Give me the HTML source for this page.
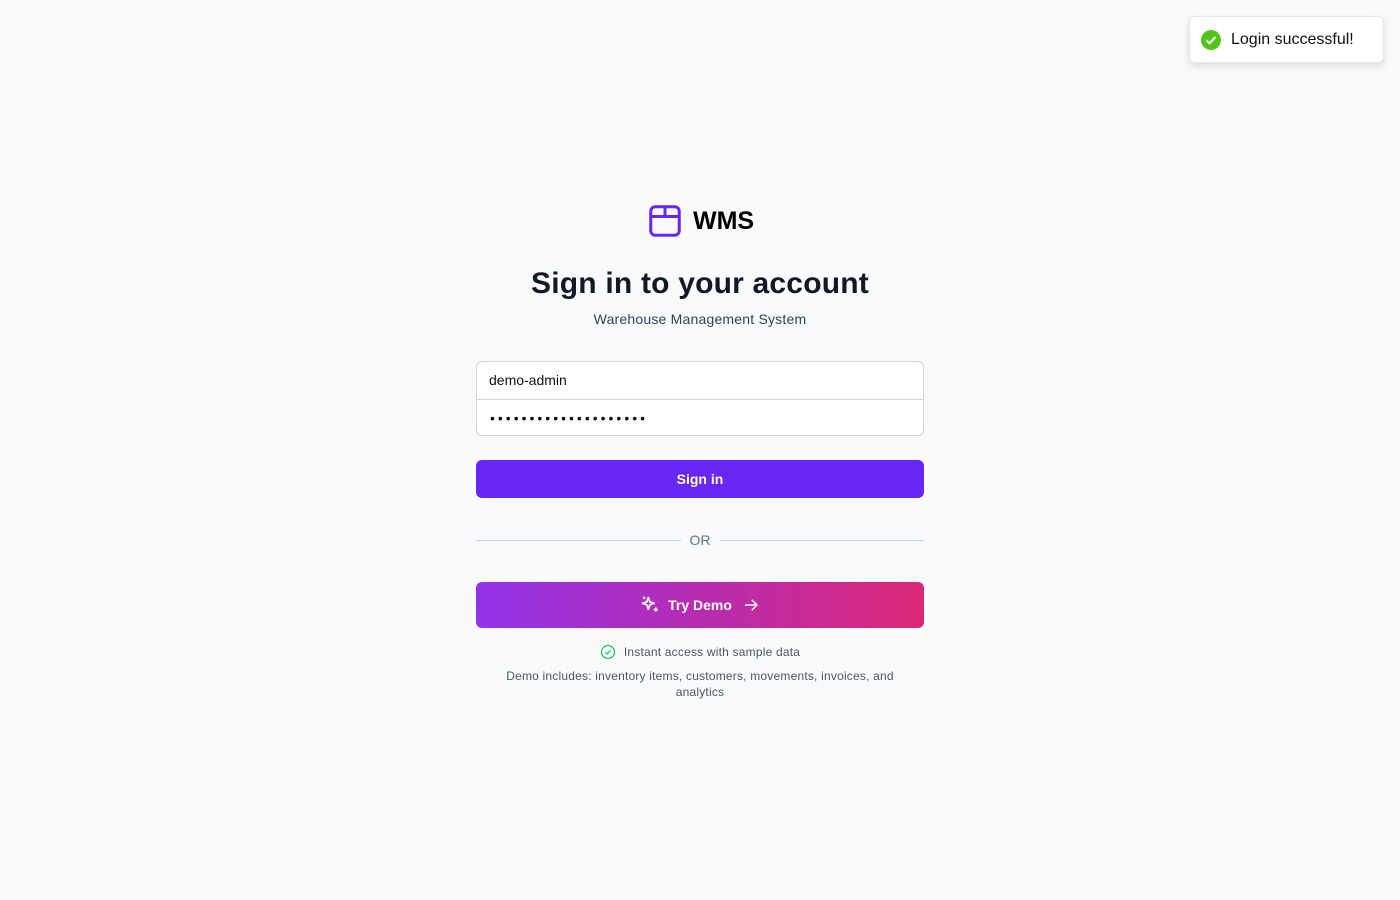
<!DOCTYPE html>
<html><head><style>
*{box-sizing:border-box;margin:0;padding:0}
body{width:1400px;height:900px;background:#f9fafb;font-family:"Liberation Sans",sans-serif;position:relative;overflow:hidden}
.toast{position:absolute;left:1189px;top:16px;width:195px;height:47px;background:#fff;border:1px solid #e5e7eb;border-radius:6px;box-shadow:0 3px 8px rgba(0,0,0,.12);display:flex;align-items:center;padding-left:11px;font-size:16px;color:#111}
.toast svg{margin-right:10px}
.logo{position:absolute;left:647px;top:203px;display:flex;align-items:center}
.logo span{font-size:25px;font-weight:bold;color:#000;margin-left:10px}
h1{position:absolute;top:267px;width:100%;text-align:center;font-size:30px;font-weight:bold;color:#111827;letter-spacing:0.2px}
.sub{position:absolute;top:311px;width:100%;text-align:center;font-size:14px;color:#374151;letter-spacing:0.2px}
.inputs{position:absolute;left:476px;top:361px;width:448px;height:75px;border:1px solid #d1d5db;border-radius:6px;background:#fff}
.inputs div{height:37px;padding-left:12px;line-height:37px;font-size:14px;color:#111}
.inputs div+div{border-top:1px solid #d1d5db;letter-spacing:3px;padding-left:13px}
.btn{position:absolute;left:476px;top:460px;width:448px;height:38px;background:#6526f6;border-radius:6px;color:#fff;font-weight:bold;font-size:14px;text-align:center;line-height:38px}
.or{position:absolute;left:476px;top:532px;width:448px;display:flex;align-items:center;font-size:14px;color:#6b7280}
.or i{flex:1;height:1px;background:#d1d5db}.or b{font-weight:normal;padding:0 9px}
.demo{position:absolute;left:476px;top:582px;width:448px;height:46px;border-radius:6px;background:linear-gradient(90deg,#9333ea,#db2777);color:#fff;font-weight:bold;font-size:14px;display:flex;align-items:center;justify-content:center}
.note{position:absolute;top:644px;width:100%;text-align:center;font-size:12px;color:#4b5563;display:flex;justify-content:center;align-items:center;letter-spacing:0.2px}
.inc{position:absolute;left:490px;top:668px;width:420px;text-align:center;font-size:12px;color:#4b5563;line-height:16px;letter-spacing:0.2px}
</style></head><body>
<div class="toast"><svg width="20" height="20" viewBox="0 0 20 20"><circle cx="10" cy="10" r="10" fill="#52c41a"/><path d="M5.5 10.3l3 3 6-6.3" stroke="#fff" stroke-width="2" fill="none"/></svg>Login successful!</div>
<div class="logo"><svg width="36" height="36" viewBox="0 0 24 24" fill="none" stroke="#6526f6" stroke-width="2" stroke-linejoin="round"><rect x="2.5" y="2.5" width="19" height="19" rx="3"/><path d="M2.5 9h19M12 2.5V9"/></svg><span>WMS</span></div>
<h1>Sign in to your account</h1>
<div class="sub">Warehouse Management System</div>
<div class="inputs"><div>demo-admin</div><div>••••••••••••••••••••</div></div>
<div class="btn">Sign in</div>
<div class="or"><i></i><b>OR</b><i></i></div>
<div class="demo"><svg width="20" height="20" viewBox="0 0 24 24" fill="none" stroke="#fff" stroke-width="2" stroke-linejoin="round" style="margin-right:8px"><path d="M10 3l1.8 5.2L17 10l-5.2 1.8L10 17l-1.8-5.2L3 10l5.2-1.8z"/><path d="M19 15v5M16.5 17.5h5M5 2v3M3.5 3.5h3"/></svg>Try Demo<svg width="18" height="18" viewBox="0 0 24 24" fill="none" stroke="#fff" stroke-width="2" style="margin-left:10px"><path d="M4 12h16M13 5l7 7-7 7"/></svg></div>
<div class="note"><svg width="16" height="16" viewBox="0 0 16 16" fill="none" stroke="#22c55e" stroke-width="1.3" style="margin-right:8px"><circle cx="8" cy="8" r="6.5"/><path d="M5.3 8.2l1.8 1.8 3.5-3.7"/></svg>Instant access with sample data</div>
<div class="inc">Demo includes: inventory items, customers, movements, invoices, and analytics</div>
</body></html>
